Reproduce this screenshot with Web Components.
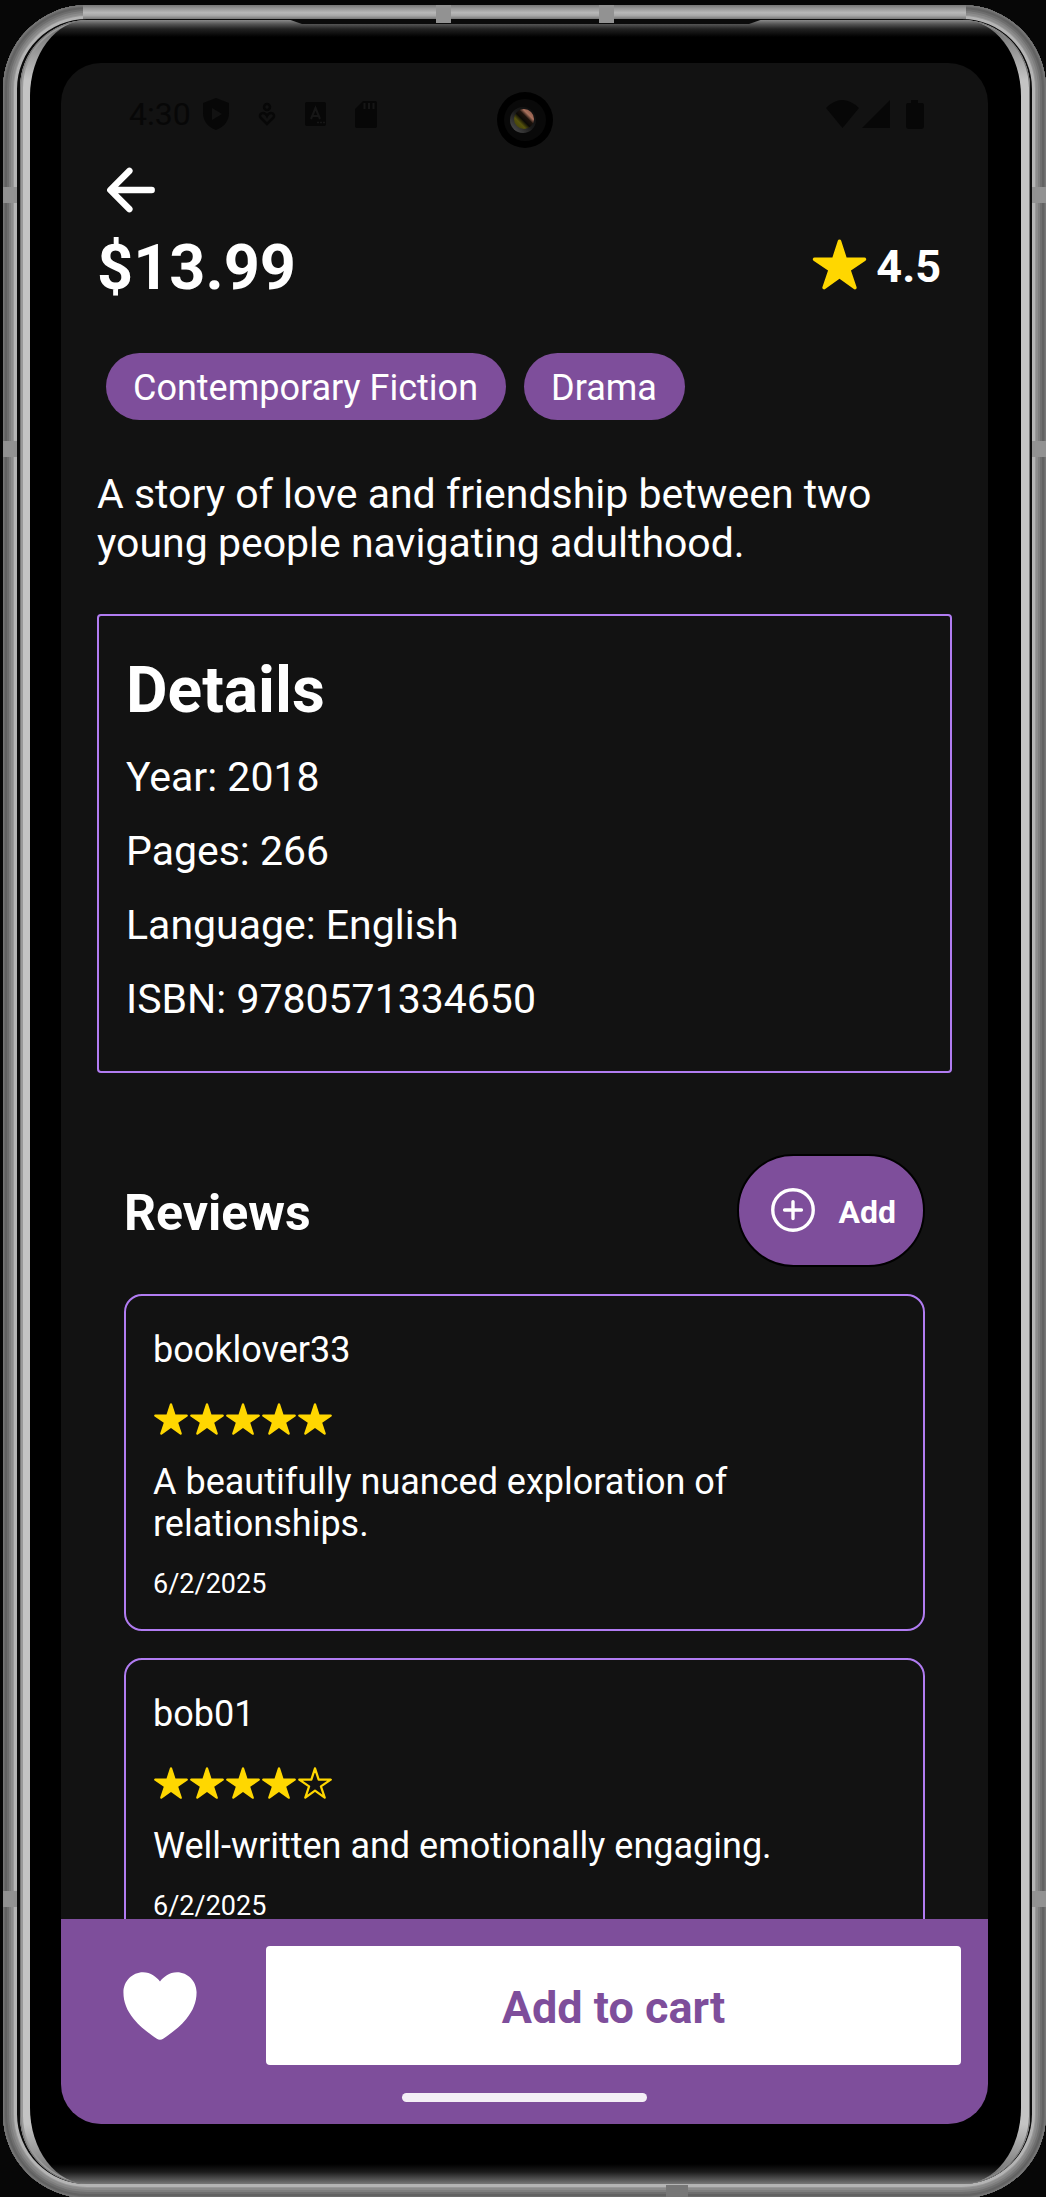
<!DOCTYPE html>
<html lang="en">
<head>
<meta charset="utf-8">
<meta name="viewport" content="width=device-width, initial-scale=1">
<title>Book details</title>
<style>
  html, body { height: 100%; }
  body {
    margin: 0;
    box-sizing: border-box;
    padding: 5px 0 0 3px;
    overflow: hidden;
    background: #070707;
    color: #fff;
    font-family: Roboto, "Liberation Sans", sans-serif;
    --surface: #121212;
    --brand: #7e4e9b;
    --outline: #b17cf2;
    --gold: #ffd700;
  }
</style>
</head>
<body>
<phone-frame>
  <status-bar slot="status" time="4:30"></status-bar>

  <back-link></back-link>
  <book-summary rating="4.5">$13.99</book-summary>
  <genre-list>
    <genre-chip>Contemporary Fiction</genre-chip>
    <genre-chip>Drama</genre-chip>
  </genre-list>
  <book-description>A story of love and friendship between two young people navigating adulthood.</book-description>
  <details-card heading="Details">
    <detail-line>Year: 2018</detail-line>
    <detail-line>Pages: 266</detail-line>
    <detail-line>Language: English</detail-line>
    <detail-line>ISBN: 9780571334650</detail-line>
  </details-card>
  <review-section heading="Reviews">
    <review-card author="booklover33" stars="5" date="6/2/2025">A beautifully nuanced exploration of relationships.</review-card>
    <review-card author="bob01" stars="4" date="6/2/2025">Well-written and emotionally engaging.</review-card>
  </review-section>

  <cart-bar slot="footer">Add to cart</cart-bar>
</phone-frame>

<script>
const define = (name, render) => customElements.define(name, class extends HTMLElement {
  constructor() { super(); this.attachShadow({ mode: 'open' }); }
  connectedCallback() {
    this.shadowRoot.innerHTML = render(this);
  }
});

const ICONS = {
  back: '<path d="M244 400 100 256l144-144M120 256h292" fill="none" stroke="currentColor" stroke-width="48" stroke-linecap="round" stroke-linejoin="round"/>',
  star: '<path fill="currentColor" d="M394 480a16 16 0 01-9.39-3L256 383.76 127.39 477a16 16 0 01-24.55-18.08L153 310.35 23 221.2a16 16 0 019-29.2h160.38l48.4-148.95a16 16 0 0130.44 0l48.4 149H480a16 16 0 019.05 29.2L359 310.35l50.13 148.53A16 16 0 01394 480z"/>',
  'star-outline': '<path fill="none" stroke="currentColor" stroke-width="32" stroke-linejoin="round" d="M480 208H308L256 48l-52 160H32l140 96-54 160 138-100 138 100-54-160z"/>',
  add: '<g fill="none" stroke="currentColor" stroke-width="32" stroke-linecap="round"><circle cx="256" cy="256" r="192"/><path d="M256 176v160M336 256H176"/></g>',
  heart: '<path fill="currentColor" d="M256 448a32 32 0 01-18-5.57c-78.59-53.35-112.62-89.93-131.39-112.8-40-48.75-59.15-98.8-58.61-153C48.63 114.52 98.46 64 159.08 64c44.08 0 78 28 96.92 52C275 92 308.840 64 352.92 64 413.54 64 463.37 114.52 464 176.64c.54 54.21-18.63 104.26-58.61 153-18.77 22.87-52.8 59.45-131.39 112.8A32 32 0 01256 448z"/>'
};

define('ui-icon', el => `
  <style>
    :host { display: block; flex: none; }
    svg { display: block; }
  </style>
  <svg width="${el.getAttribute('size')}" height="${el.getAttribute('size')}" viewBox="0 0 512 512" aria-hidden="true">${ICONS[el.getAttribute('name')]}</svg>`);

/* Brushed metal phone body around a rounded display. */
define('phone-frame', () => `
  <style>
    :host { display: block; height: 100%; }
    * { box-sizing: border-box; }
    .rim {
      position: relative;
      height: calc(100% + 1px);
      padding: 15px 16px 14px 17px;
      border-radius: 84px;
      background: #888;
      box-shadow:
        inset 0 0 0 1px #777, inset 0 0 0 2px #6c6c6c, inset 0 0 0 4px #626262,
        inset 0 0 0 6px #6e6e6e, inset 0 0 0 8px #7e7e7e, inset 0 0 0 10px #8c8c8c,
        inset 0 0 0 11px #999, inset 0 0 0 14px #b4b4b4, inset 0 0 0 20px #0c0c0c;
    }
    .rim::before {
      content: "";
      position: absolute;
      inset: 0 80px auto;
      height: 14px;
      background: linear-gradient(#777, #999 25%, #b8b8b8 55%, #a8a8a8 75%, #777);
    }
    .edge {
      position: relative;
      height: 100%;
      padding: 0 9px 0 10px;
      border-radius: 68px;
      background: linear-gradient(#666, #c4c4c4 60px, #c4c4c4 calc(100% - 60px), #666);
      box-shadow: inset 0 0 0 1px #777, inset 1px 0 0 2px #9a9a9a;
    }
    .glass {
      position: relative;
      height: 100%;
      padding: 43px 33px 60px 31px;
      border-radius: 58px / 76px;
      background:
        linear-gradient(#8a8a8a, #555 4px, #222 9px, transparent 17px),
        linear-gradient(0deg, #777, #505050 5px, #1c1c1c 12px, transparent 20px),
        #000;
    }
    .lip {
      position: absolute;
      left: 26%;
      right: 26%;
      top: -1px;
      height: 5px;
      background: #0a0a0a;
      clip-path: polygon(0 0, 100% 0, 97% 100%, 3% 100%);
    }
    .seam { position: absolute; background: #929292; }
    .seam.h { width: 15px; height: 18px; top: 0; }
    .seam.v { width: 14px; height: 16px; left: 0; }
    .seam.right { left: auto; right: 0; }
    .seam.foot { width: 22px; height: 13px; top: auto; bottom: 0; background: #777; }
    .display {
      display: flex;
      flex-direction: column;
      height: 100%;
      border-radius: 40px;
      overflow: hidden;
      background: var(--surface);
    }
    main {
      flex: 1;
      min-height: 0;
      display: flex;
      flex-direction: column;
      padding: 0 36px;
      overflow: auto;
      scrollbar-width: none;
    }
    ::slotted(*) { flex: none; }
  </style>
  <div class="rim">
    <div class="edge">
      <div class="glass">
        <div class="lip"></div>
        <div class="display">
          <slot name="status"></slot>
          <main><slot></slot></main>
          <slot name="footer"></slot>
        </div>
      </div>
    </div>
    <i class="seam h" style="left: 433px"></i>
    <i class="seam h" style="left: 596px"></i>
    <i class="seam v" style="top: 182px"></i>
    <i class="seam v" style="top: 436px"></i>
    <i class="seam v" style="top: 1886px"></i>
    <i class="seam v right" style="top: 182px"></i>
    <i class="seam v right" style="top: 436px"></i>
    <i class="seam v right" style="top: 1886px"></i>
    <i class="seam foot" style="left: 663px"></i>
  </div>`);

define('status-bar', el => `
  <style>
    :host {
      display: flex;
      align-items: center;
      position: relative;
      height: 40px;
      padding: 31px 63px 22px 68px;
      color: #070707;
      font-size: 32px;
      line-height: 40px;
    }
    svg { display: block; flex: none; }
    .left, .right { display: flex; align-items: center; }
    .left { gap: 29px; }
    .left span { margin-right: -17px; }
    .right { margin-left: auto; }
    .camera { position: absolute; top: 28px; left: 50%; margin-left: -29px; }
  </style>
  <div class="left">
    <span>${el.getAttribute('time')}</span>
    <svg width="26" height="32" viewBox="0 0 26 32"><path fill="currentColor" fill-rule="evenodd" d="M13 0 26 5v10c0 8-5 14-13 17C5 29 0 23 0 15V5zM9 10v12l10-6z"/></svg>
    <svg width="18" height="24" viewBox="0 0 18 24" fill="none" stroke="currentColor" stroke-width="2.5"><circle cx="9" cy="5" r="3"/><path d="M9 22 3 16c-2-2-1-5 2-5 2 0 3 1 4 3 1-2 2-3 4-3 3 0 4 3 2 5z"/></svg>
    <svg width="21" height="24" viewBox="0 0 21 24"><rect width="21" height="24" rx="2" fill="currentColor"/><path d="M6 17 10.500 6 15 17M7.500 14h6" fill="none" stroke="#161616" stroke-width="2"/><path d="M12 20.500h8" stroke="#161616" stroke-width="1.500" stroke-dasharray="2 1"/></svg>
    <svg width="22" height="27" viewBox="0 0 22 27"><path fill="currentColor" d="M8 0h12q2 0 2 2v23q0 2-2 2H2q-2 0-2-2V8z"/><path d="M9.500 2v6M14 2v6M18.500 2v6" stroke="#161616" stroke-width="2"/></svg>
  </div>
  <svg class="camera" width="58" height="58" viewBox="0 0 58 58" aria-hidden="true">
    <defs>
      <linearGradient id="ring" x1="0" y1="1" x2="1" y2="0">
        <stop offset="0" stop-color="#555"/><stop offset=".5" stop-color="#1a1a1a"/><stop offset="1" stop-color="#0b0b0b"/>
      </linearGradient>
      <linearGradient id="lens" x1="0" y1="1" x2="1" y2="0">
        <stop offset="0" stop-color="#3a3a08"/><stop offset=".3" stop-color="#55520c"/>
        <stop offset=".45" stop-color="#0c0a06"/><stop offset=".6" stop-color="#1c120c"/>
        <stop offset=".72" stop-color="#a8705c"/><stop offset="1" stop-color="#7a4c40"/>
      </linearGradient>
    </defs>
    <circle cx="29" cy="29" r="28" fill="#000"/>
    <circle cx="29" cy="29" r="21" fill="#090909"/>
    <circle cx="27" cy="29" r="13" fill="url(#ring)"/>
    <circle cx="28" cy="28" r="10" fill="url(#lens)"/>
  </svg>
  <div class="right">
    <svg width="100" height="30" viewBox="0 0 100 30" fill="currentColor" aria-hidden="true">
      <path d="M1 9Q17-7 34 9L17.500 29z"/>
      <path d="M65 1v28H37z"/>
      <path d="M86 1h7v3h4q2 0 2 2v21q0 3-3 3H84q-3 0-3-3V6q0-2 2-2h3z"/>
    </svg>
  </div>`);

define('back-link', () => `
  <style>
    :host { display: flex; }
    button { padding: 0; border: 0; background: none; color: #fff; }
  </style>
  <button type="button" aria-label="Back"><ui-icon name="back" size="68"></ui-icon></button>`);

define('book-summary', el => `
  <style>
    :host { display: flex; justify-content: space-between; align-items: flex-start; margin-top: 7px; }
    h1 { margin: 0; font-size: 63px; line-height: 74px; }
    .rating { display: flex; align-items: flex-end; gap: 8px; padding: 5px 11px 0 0; font-size: 45px; line-height: 53px; font-weight: 700; }
    ui-icon { color: var(--gold); }
  </style>
  <h1><slot></slot></h1>
  <div class="rating"><ui-icon name="star" size="57"></ui-icon><span>${el.getAttribute('rating')}</span></div>`);

define('genre-list', () => `
  <style>:host { display: flex; flex-wrap: wrap; gap: 18px; margin: 48px 9px 0; }</style>
  <slot></slot>`);

define('genre-chip', () => `
  <style>
    :host { display: block; padding: 14px 28px 11px 27px; border-radius: 34px; background: var(--brand); font-size: 36px; line-height: 42px; }
  </style>
  <slot></slot>`);

define('book-description', () => `
  <style>
    :host { display: block; margin-top: 50px; font-size: 41px; line-height: 49px; }
    p { margin: 0; }
  </style>
  <p><slot></slot></p>`);

define('details-card', el => `
  <style>
    :host { display: flex; flex-direction: column; gap: 25px; margin-top: 46px; padding: 37px 27px 47px; border: 2px solid var(--outline); border-radius: 4px; }
    h2 { margin: 0; font-size: 64px; line-height: 75px; }
  </style>
  <h2>${el.getAttribute('heading')}</h2>
  <slot></slot>`);

define('detail-line', () => `
  <style>:host { display: block; font-size: 41px; line-height: 49px; }</style>
  <slot></slot>`);

define('review-section', el => `
  <style>
    :host { display: flex; flex-direction: column; gap: 27px; margin-top: 81px; padding: 0 27px 27px; }
    header { display: flex; justify-content: space-between; align-items: center; }
    h2 { margin: 0; padding-top: 4px; font-size: 50px; line-height: 58px; }
    button {
      display: flex;
      align-items: center;
      gap: 18px;
      padding: 27px 27px 28px;
      border: 2px solid #000;
      border-radius: 57px;
      background: var(--brand);
      color: #fff;
      font: 700 32px/38px Roboto, "Liberation Sans", sans-serif;
    }
    span { padding-top: 4px; }
  </style>
  <header>
    <h2>${el.getAttribute('heading')}</h2>
    <button type="button"><ui-icon name="add" size="54"></ui-icon><span>Add</span></button>
  </header>
  <slot></slot>`);

define('star-rating', el => {
  const value = Number(el.getAttribute('value'));
  const stars = [1, 2, 3, 4, 5].map(n =>
    `<ui-icon name="${n <= value ? 'star' : 'star-outline'}" size="36"></ui-icon>`).join('');
  return `<style>:host { display: flex; color: var(--gold); }</style>${stars}`;
});

define('review-card', el => `
  <style>
    :host { display: block; padding: 33px 27px 29px; border: 2px solid var(--outline); border-radius: 18px; font-size: 36px; line-height: 42px; }
    p { margin: 0; }
    star-rating { margin: 30px 0 24px; }
    time { display: block; margin-top: 23px; font-size: 27px; line-height: 32px; }
  </style>
  <p>${el.getAttribute('author')}</p>
  <star-rating value="${el.getAttribute('stars')}"></star-rating>
  <p><slot></slot></p>
  <time>${el.getAttribute('date')}</time>`);

define('cart-bar', () => `
  <style>
    :host { display: block; padding: 27px 27px 22px; background: var(--brand); }
    .row { display: flex; align-items: center; gap: 34px; }
    button { border: 0; font-family: inherit; }
    .like { padding: 0 27px; background: none; color: #fff; }
    .cart { flex: 1; padding: 35px 0 31px; border-radius: 4px; background: #fff; color: var(--brand); font-size: 45px; line-height: 53px; font-weight: 700; }
    .home { width: 245px; height: 9px; margin: 28px auto 0; border-radius: 5px; background: #f4eff6; }
  </style>
  <div class="row">
    <button class="like" type="button" aria-label="Add to favourites"><ui-icon name="heart" size="90"></ui-icon></button>
    <button class="cart" type="button"><slot></slot></button>
  </div>
  <div class="home"></div>`);
</script>
</body>
</html>
